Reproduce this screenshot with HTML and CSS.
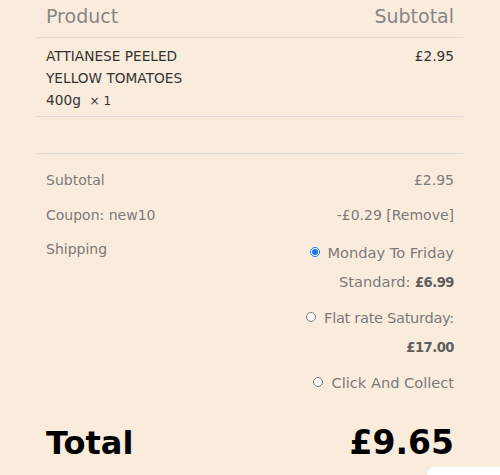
FILE: index.html
```html
<!DOCTYPE html>
<html>
<head>
<meta charset="utf-8">
<link rel="stylesheet" href="styles.css">
</head>
<body>
<div class="cart">
  <div class="head">
    <span>Product</span>
    <span>Subtotal</span>
  </div>
  <div class="item">
    <div class="item-name">ATTIANESE PEELED<br>YELLOW TOMATOES<br>400g&nbsp; <span class="qty">×&nbsp;1</span></div>
    <div class="item-price">£2.95</div>
  </div>
  <div class="spacer"></div>
  <div class="totals">
    <div class="trow">
      <span>Subtotal</span>
      <span>£2.95</span>
    </div>
    <div class="trow">
      <span>Coupon: new10</span>
      <span>-£0.29 [Remove]</span>
    </div>
    <div class="trow ship">
      <span class="ship-label">Shipping</span>
      <ul class="methods">
        <li class="m1"><input type="radio" name="s" checked><label>Monday To Friday<br>Standard: <b>£6.99</b></label></li>
        <li class="m2"><input type="radio" name="s"><label>Flat rate Saturday:<br><b>£17.00</b></label></li>
        <li class="m3"><input type="radio" name="s"><label>Click And Collect</label></li>
      </ul>
    </div>
    <div class="total">
      <span class="total-label">Total</span>
      <span class="total-value">£9.65</span>
    </div>
  </div>
</div>
<div class="widget"></div>
</body>
</html>
```
FILE: styles.css
```css
html, body {
  margin: 0;
  padding: 0;
  background: #faecdc;
  height: 100%;
  overflow: hidden;
}
body {
  font-family: "DejaVu Sans", sans-serif;
  color: #7a7a7a;
}
.cart {
  margin-left: 37px;
  width: 426px;
}
.head {
  line-height: 33px;
  display: flex;
  justify-content: space-between;
  padding: 0 9px;
  font-size: 19px;
  color: #868686;
  border-bottom: 1px solid #dedad5;
  box-sizing: border-box;
  height: 38px;
}
.item {
  display: flex;
  justify-content: space-between;
  padding: 7px 9px 4px;
  font-size: 13.7px;
  line-height: 22px;
  color: #333;
  border-bottom: 1px solid #dedad5;
}
.qty { font-size: 12px; }
.spacer {
  height: 36px;
  border-bottom: 1px solid #dedad5;
}
.totals {
  padding: 9px 9px 0;
  font-size: 14px;
}
.trow {
  display: flex;
  justify-content: space-between;
  line-height: 35px;
}
.ship { align-items: flex-start; }
.ship-label { line-height: 32px; }
.methods {
  list-style: none;
  margin: 5px 0 0;
  padding: 0;
  text-align: right;
  line-height: 29px;
  font-size: 14.6px;
}
.methods li { margin-bottom: 7px; }
.methods li:last-child { margin-bottom: 0; }
.m2 label { letter-spacing: -0.3px; }
.methods input {
  width: 10px;
  height: 10px;
  margin: 0 8px 0 0;
  vertical-align: 1px;
  accent-color: #1a73e8;
}
.methods b {
  color: #5e5e5e;
  font-family: "DejaVu Sans Condensed", "DejaVu Sans", sans-serif;
  letter-spacing: -0.5px;
}
.total {
  display: flex;
  justify-content: space-between;
  align-items: center;
  margin-top: 26px;
  line-height: 40px;
  color: #000;
}
.total-label { font-size: 32px; font-weight: bold; }
.total-value { font-size: 33px; font-weight: 900; }
.widget {
  position: fixed;
  left: 427px;
  top: 467px;
  width: 120px;
  height: 60px;
  background: #fff;
  border-radius: 8px 0 0 0;
}
```
